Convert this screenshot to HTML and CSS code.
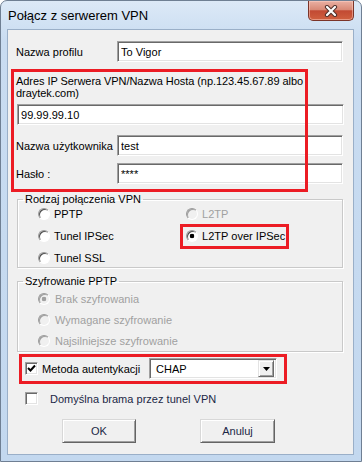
FILE: index.html
```html
<!DOCTYPE html>
<html lang="pl">
<head>
    <meta charset="UTF-8">
    <title>Połącz z serwerem VPN</title>
    <link rel="stylesheet" href="styles.css">
</head>
<body>
    <div class="window">
        <div class="titlebar">
            <span class="title">Połącz z serwerem VPN</span>
            <button class="close" type="button">
                <svg width="14" height="12" viewBox="0 0 14 12">
                    <path d="M3 2 L11 10 M11 2 L3 10" stroke="#50302b" stroke-width="4.2" stroke-linecap="round"/>
                    <path d="M3 2 L11 10 M11 2 L3 10" stroke="#fff" stroke-width="2.2" stroke-linecap="round"/>
                </svg>
            </button>
        </div>

        <form class="client">
            <div class="row row-profile">
                <label class="lbl" for="profil">Nazwa profilu</label>
                <input class="edit" id="profil" type="text" value="To Vigor">
            </div>

            <p class="host-lbl">Adres IP Serwera VPN/Nazwa Hosta (np.123.45.67.89 albo<br>draytek.com)</p>
            <input class="edit edit-host" type="text" value="99.99.99.10">

            <div class="row row-user">
                <label class="lbl" for="user">Nazwa użytkownika</label>
                <input class="edit" id="user" type="text" value="test">
            </div>
            <div class="row row-pass">
                <label class="lbl" for="pass">Hasło :</label>
                <input class="edit" id="pass" type="text" value="****">
            </div>

            <fieldset class="group group-type">
                <legend>Rodzaj połączenia VPN</legend>
                <div class="radios radios-2col">
                    <label class="opt"><input class="radio" type="radio" name="typ">PPTP</label>
                    <label class="opt off"><input class="radio" type="radio" name="typ" disabled>L2TP</label>
                    <label class="opt"><input class="radio" type="radio" name="typ">Tunel IPSec</label>
                    <label class="opt"><input class="radio" type="radio" name="typ" checked>L2TP over IPSec</label>
                    <label class="opt"><input class="radio" type="radio" name="typ">Tunel SSL</label>
                </div>
            </fieldset>

            <fieldset class="group group-enc">
                <legend>Szyfrowanie PPTP</legend>
                <div class="radios">
                    <label class="opt off"><input class="radio" type="radio" name="enc" checked disabled>Brak szyfrowania</label>
                    <label class="opt off"><input class="radio" type="radio" name="enc" disabled>Wymagane szyfrowanie</label>
                    <label class="opt off"><input class="radio" type="radio" name="enc" disabled>Najsilniejsze szyfrowanie</label>
                </div>
            </fieldset>

            <div class="row row-auth">
                <span class="check">
                    <svg width="9" height="9" viewBox="0 0 9 9"><path d="M1 4 L3.5 6.5 L8 1.5" fill="none" stroke="#000" stroke-width="2"/></svg>
                </span>
                <span class="auth-lbl">Metoda autentykacji</span>
                <div class="combo">
                    <span class="combo-val">CHAP</span>
                    <span class="combo-btn">
                        <svg width="7" height="4" viewBox="0 0 7 4"><path d="M0 0 H7 L3.5 4 Z" fill="#000"/></svg>
                    </span>
                </div>
            </div>

            <div class="row row-gw">
                <span class="check"></span>
                <span class="gw-lbl">Domyślna brama przez tunel VPN</span>
            </div>

            <div class="buttons">
                <button class="btn btn-ok" type="button">OK</button>
                <button class="btn btn-cancel" type="button">Anuluj</button>
            </div>
        </form>

        <div class="mark mark-host"></div>
        <div class="mark mark-l2tp"></div>
        <div class="mark mark-auth"></div>
    </div>
</body>
</html>
```

FILE: styles.css
```css
body {
    margin: 0;
    background: #ffffff;
    font-family: 'Liberation Sans', Arial, sans-serif;
    font-size: 11px;
    letter-spacing: 0.02px;
    color: #000;
}

.window {
    position: relative;
    box-sizing: border-box;
    width: 362px;
    height: 462px;
    display: flex;
    flex-direction: column;
    padding: 0 7px 6px 6px;
    border: 1px solid #6f7f93;
    border-radius: 7px 7px 0 0;
    background: linear-gradient(#dce9f7, #c9dcf1 40px, #c3d8ef);
}

.titlebar {
    height: 28px;
    display: flex;
    align-items: flex-start;
}
.title {
    font-size: 13px;
    line-height: 15px;
    letter-spacing: 0;
    margin: 7px 0 0 1px;
    color: #000;
}
.close {
    margin-left: auto;
    width: 46px;
    height: 20px;
    padding: 0;
    border: 1px solid #7b3429;
    border-top: none;
    border-radius: 0 0 5px 5px;
    background: linear-gradient(#eab0a3, #d98a77 45%, #c24a33 52%, #d0603f);
    box-shadow: inset 0 0 0 1px rgba(255, 210, 200, 0.5);
    display: flex;
    align-items: center;
    justify-content: center;
}

.client {
    flex: 1;
    margin: 0;
    padding: 11px 9px 0 8px;
    border: 1px solid #9aafc8;
    background: #f0f0f0;
}

.row {
    display: flex;
    align-items: center;
}
.lbl {
    width: 101px;
}

.edit {
    box-sizing: border-box;
    height: 21px;
    margin: 0;
    padding: 0 3px;
    font-family: 'Liberation Sans', Arial, sans-serif;
    font-size: 11px;
    letter-spacing: 0.02px;
    color: #000;
    background: #fff;
    border: 1px solid;
    border-color: #a0a0a0 #fff #fff #a0a0a0;
    box-shadow: inset 1px 1px 0 #696969, inset -1px -1px 0 #e3e3e3;
    outline: none;
}
.row .edit {
    width: 226px;
}

.row-profile {
    height: 21px;
}
.host-lbl {
    margin: 13px 0 0;
    line-height: 12px;
    letter-spacing: -0.06px;
}
.edit-host {
    display: block;
    width: 327px;
    margin: 5px 0 0 1px;
}
.row-user {
    margin-top: 10px;
}
.row-pass {
    margin-top: 7px;
}

.group {
    margin: 9px 0 0 1px;
    width: 326px;
    box-sizing: border-box;
    padding: 0 0 0 5px;
    border: 1px solid #c9c9c9;
    box-shadow: inset 1px 1px 0 #fff, 1px 1px 0 #fff;
}
.group legend {
    padding: 0 2px;
    line-height: 12px;
}
.group-enc {
    margin-top: 7px;
    padding-bottom: 1px;
}

.radios {
    margin-left: 15px;
    display: grid;
    row-gap: 4px;
}
.radios-2col {
    grid-template-columns: 148px 1fr;
}
.group-enc .radios {
    row-gap: 3px;
    padding-top: 3px;
}
.opt {
    height: 18px;
    display: flex;
    align-items: center;
}
.opt.off {
    color: #a0a0a0;
}

.radio {
    appearance: none;
    -webkit-appearance: none;
    box-sizing: border-box;
    width: 12px;
    height: 12px;
    margin: 0 4px 0 0;
    border-radius: 50%;
    border: 1px solid;
    border-color: #9a9a9a #fff #fff #9a9a9a;
    box-shadow: inset 1px 1px 0 #505050;
    background: #fff;
}
.radio:checked {
    background: radial-gradient(circle, #000 0 2px, #fff 2.6px);
}
.radio:disabled {
    background: #f0f0f0;
    box-shadow: inset 1px 1px 0 #a0a0a0;
}
.radio:disabled:checked {
    background: radial-gradient(circle, #a0a0a0 0 2px, #f0f0f0 2.6px);
}
.group-enc .radio {
    margin-right: 5px;
}

.check {
    box-sizing: border-box;
    width: 13px;
    height: 13px;
    display: flex;
    align-items: center;
    justify-content: center;
    background: #fff;
    border: 1px solid;
    border-color: #a0a0a0 #fff #fff #a0a0a0;
    box-shadow: inset 1px 1px 0 #696969, inset -1px -1px 0 #e3e3e3;
}

.row-auth {
    margin-top: 6px;
    padding-left: 9px;
    height: 21px;
}
.auth-lbl {
    width: 111px;
    padding-left: 4px;
    box-sizing: border-box;
}

.combo {
    box-sizing: border-box;
    width: 128px;
    height: 21px;
    display: flex;
    align-items: center;
    background: #fff;
    border: 1px solid;
    border-color: #a0a0a0 #fff #fff #a0a0a0;
    box-shadow: inset 1px 1px 0 #696969, inset -1px -1px 0 #e3e3e3;
    padding: 1px 2px 1px 1px;
}
.combo-val {
    flex: 1;
    padding-left: 5px;
}
.combo-btn {
    box-sizing: border-box;
    width: 16px;
    height: 17px;
    display: flex;
    align-items: center;
    justify-content: center;
    background: #f0f0f0;
    border: 1px solid;
    border-color: #e3e3e3 #696969 #696969 #e3e3e3;
    box-shadow: inset 1px 1px 0 #fff, inset -1px -1px 0 #a0a0a0;
}

.row-gw {
    margin-top: 11px;
    padding-left: 9px;
    height: 17px;
}
.gw-lbl {
    margin-left: 12px;
    color: #1b2745;
}

.buttons {
    margin-top: 12px;
    padding-left: 46px;
    display: flex;
    gap: 64px;
}
.btn {
    box-sizing: border-box;
    width: 74px;
    height: 24px;
    padding: 0;
    font-family: 'Liberation Sans', Arial, sans-serif;
    font-size: 11px;
    color: #1b2745;
    background: #f0f0f0;
    border: 1px solid;
    border-color: #d8d8d8 #646464 #646464 #d8d8d8;
    box-shadow: inset 1px 1px 0 #fff, inset -1px -1px 0 #a0a0a0;
}
.btn-cancel {
    width: 75px;
}

.mark {
    position: absolute;
    box-sizing: border-box;
    border: 3px solid #ec1c24;
}
.mark-host {
    left: 10px;
    top: 68px;
    width: 297px;
    height: 123px;
}
.mark-l2tp {
    left: 179px;
    top: 223px;
    width: 109px;
    height: 25px;
}
.mark-auth {
    left: 18px;
    top: 353px;
    width: 268px;
    height: 30px;
}
```
